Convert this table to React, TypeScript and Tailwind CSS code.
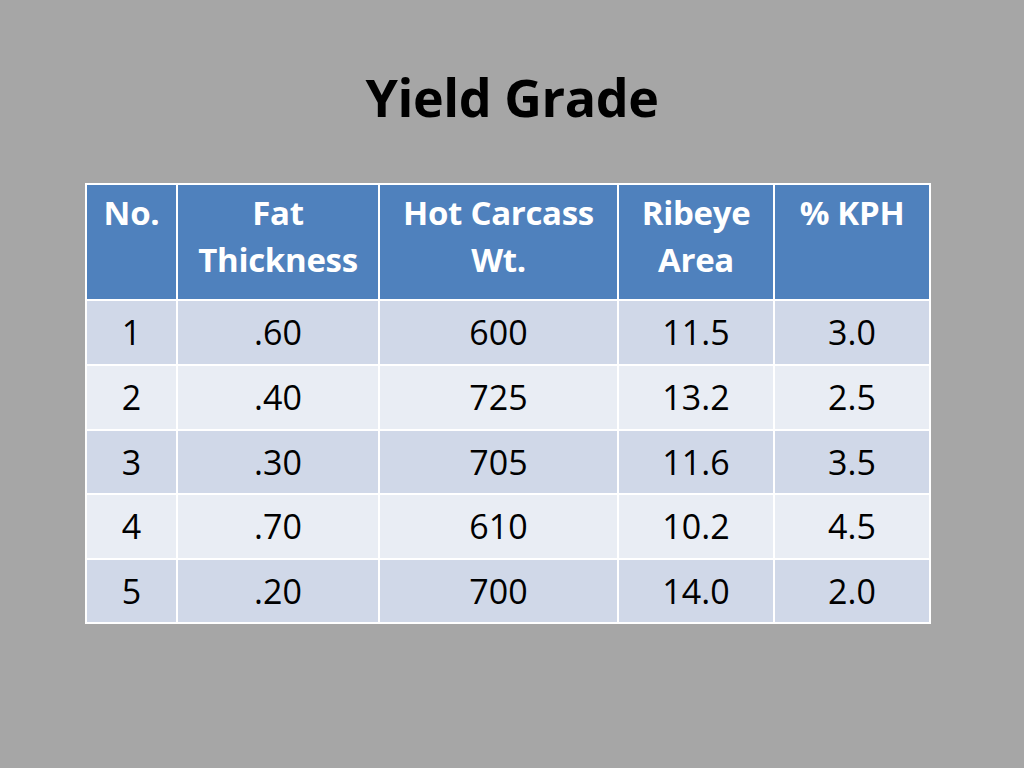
import React from "react";

const headers = [["No."], ["Fat", "Thickness"], ["Hot Carcass", "Wt."], ["Ribeye", "Area"], ["% KPH"]];
const rows = [
  ["1", ".60", "600", "11.5", "3.0"],
  ["2", ".40", "725", "13.2", "2.5"],
  ["3", ".30", "705", "11.6", "3.5"],
  ["4", ".70", "610", "10.2", "4.5"],
  ["5", ".20", "700", "14.0", "2.0"],
];
const rowH = ["h-[63px]", "h-[63px]", "h-[62px]", "h-[63px]", "h-[62px]"];

export default function App() {
  return (
    <div
      className="w-[1024px] h-[768px] bg-[#a6a6a6] flex flex-col items-center"
      style={{ fontFamily: '"Open Sans", "Liberation Sans", sans-serif' }}
    >
      <h1 className="mt-[62px] h-[70px] text-[52px] leading-[70px] font-bold text-black tracking-[-0.4px]">
        Yield Grade
      </h1>
      <div className="mt-[51px] ml-[-8px] grid grid-cols-[89px_200px_237px_154px_154px] gap-[2px] p-[2px] bg-white">
        {headers.map((h, i) => (
          <div
            key={i}
            className="h-[114px] bg-[#4f81bd] text-white font-bold text-[33px] leading-[47px] text-center pt-[4px] tracking-[-0.3px]"
          >
            {h.map((l, j) => (
              <div key={j}>{l}</div>
            ))}
          </div>
        ))}
        {rows.map((r, ri) =>
          r.map((c, ci) => (
            <div
              key={ri + "-" + ci}
              className={
                rowH[ri] +
                " flex items-center justify-center text-black text-[34px] " +
                (ri % 2 === 0 ? "bg-[#d0d8e8]" : "bg-[#e9edf4]")
              }
            >
              {c}
            </div>
          ))
        )}
      </div>
    </div>
  );
}
